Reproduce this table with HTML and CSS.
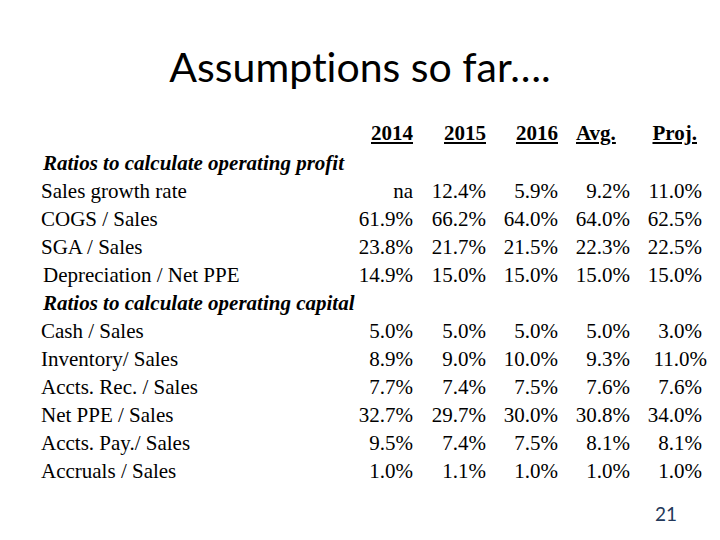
FILE: index.html
```html
<!DOCTYPE html>
<html>
<head>
<meta charset="utf-8">
<link rel="stylesheet" href="styles.css">
</head>
<body>
<div class="slide">
  <h1 class="title">Assumptions so far….</h1>
  <div class="table">
    <div class="hd"></div>
    <div class="hd num">2014</div>
    <div class="hd num">2015</div>
    <div class="hd num">2016</div>
    <div class="hd avg">Avg.</div>
    <div class="hd proj">Proj.</div>

    <div class="section">Ratios to calculate operating profit</div>

    <div class="label">Sales growth rate</div>
    <div class="num">na</div><div class="num">12.4%</div><div class="num">5.9%</div><div class="num">9.2%</div><div class="num">11.0%</div>
    <div class="label">COGS / Sales</div>
    <div class="num">61.9%</div><div class="num">66.2%</div><div class="num">64.0%</div><div class="num">64.0%</div><div class="num">62.5%</div>
    <div class="label">SGA / Sales</div>
    <div class="num">23.8%</div><div class="num">21.7%</div><div class="num">21.5%</div><div class="num">22.3%</div><div class="num">22.5%</div>
    <div class="label indent">Depreciation / Net PPE</div>
    <div class="num">14.9%</div><div class="num">15.0%</div><div class="num">15.0%</div><div class="num">15.0%</div><div class="num">15.0%</div>

    <div class="section">Ratios to calculate operating capital</div>

    <div class="label">Cash / Sales</div>
    <div class="num">5.0%</div><div class="num">5.0%</div><div class="num">5.0%</div><div class="num">5.0%</div><div class="num">3.0%</div>
    <div class="label">Inventory/ Sales</div>
    <div class="num">8.9%</div><div class="num">9.0%</div><div class="num">10.0%</div><div class="num">9.3%</div><div class="num nudge">11.0%</div>
    <div class="label">Accts. Rec. / Sales</div>
    <div class="num">7.7%</div><div class="num">7.4%</div><div class="num">7.5%</div><div class="num">7.6%</div><div class="num">7.6%</div>
    <div class="label">Net PPE / Sales</div>
    <div class="num">32.7%</div><div class="num">29.7%</div><div class="num">30.0%</div><div class="num">30.8%</div><div class="num">34.0%</div>
    <div class="label">Accts. Pay./ Sales</div>
    <div class="num">9.5%</div><div class="num">7.4%</div><div class="num">7.5%</div><div class="num">8.1%</div><div class="num">8.1%</div>
    <div class="label">Accruals / Sales</div>
    <div class="num">1.0%</div><div class="num">1.1%</div><div class="num">1.0%</div><div class="num">1.0%</div><div class="num">1.0%</div>
  </div>
  <div class="footer"><span class="page-num">21</span></div>
</div>
</body>
</html>
```

FILE: styles.css
```css
html, body {
  margin: 0;
  padding: 0;
  background: #ffffff;
}

.slide {
  width: 720px;
  height: 540px;
  display: flex;
  flex-direction: column;
  background: #ffffff;
  overflow: hidden;
}

.title {
  margin: 0;
  padding-top: 42px;
  font-family: "Lato", "Open Sans", sans-serif;
  font-weight: 400;
  font-size: 41px;
  line-height: 49px;
  font-variant-ligatures: none;
  color: #000000;
  text-align: center;
}

.table {
  margin-top: 28px;
  margin-left: 41px;
  display: grid;
  grid-template-columns: 300px 72px 73px 72px 72px 72px;
  font-family: "Liberation Serif", "Times New Roman", serif;
  font-size: 21px;
  line-height: 28px;
  color: #000000;
}

.hd {
  font-weight: bold;
  text-decoration: underline;
  text-underline-offset: 2px;
  height: 30px;
}

.hd.num {
  text-align: right;
}

.hd.avg {
  text-align: left;
  padding-left: 18px;
}

.hd.proj {
  text-align: right;
  padding-right: 5px;
}

.section {
  grid-column: 1 / -1;
  font-weight: bold;
  font-style: italic;
  padding-left: 2px;
}

.label {
  white-space: nowrap;
}

.label.indent {
  padding-left: 2px;
}

.num {
  text-align: right;
  white-space: nowrap;
}

.nudge {
  margin-right: -5px;
}

.footer {
  margin-top: auto;
  display: flex;
  justify-content: flex-end;
  padding-right: 43px;
  padding-bottom: 14px;
}

.page-num {
  font-family: "Lato", "Open Sans", sans-serif;
  font-size: 19px;
  line-height: 24px;
  color: #23385a;
}
```
